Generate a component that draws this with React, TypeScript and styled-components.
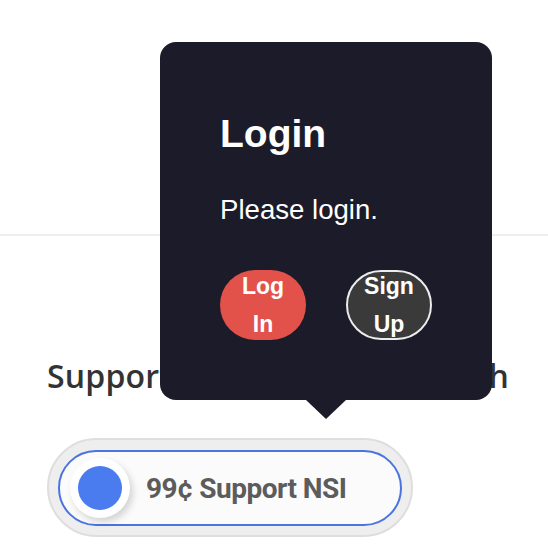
import React from "react";
import styled, { createGlobalStyle } from "styled-components";

const GlobalStyle = createGlobalStyle`
  html, body { margin: 0; padding: 0; background: #ffffff; }
  * { box-sizing: border-box; }
`;

const Page = styled.div`
  position: relative;
  width: 548px;
  height: 556px;
  overflow: hidden;
  background: #ffffff;
`;

const Header = styled.header`
  height: 236px;
  border-bottom: 2px solid #efefef;
`;

const Section = styled.section`
  padding: 0 0 0 47px;
`;

const Heading = styled.h2`
  margin: 122px 0 0 0;
  font-family: "Open Sans", sans-serif;
  font-weight: 600;
  font-size: 32px;
  line-height: 36px;
  letter-spacing: 0.2px;
  word-spacing: -12px;
  color: #333333;
  white-space: nowrap;
`;

const ToggleOuter = styled.div`
  margin-top: 44px;
  width: 366px;
  height: 99px;
  padding: 10px 9px 9px;
  border: 2px solid #dedede;
  border-radius: 50px;
  background: #efeeee;
`;

const ToggleInner = styled.div`
  display: flex;
  align-items: center;
  gap: 16px;
  height: 100%;
  padding-left: 10px;
  border: 2px solid #4a74df;
  border-radius: 40px;
  background: #fbfbfb;
`;

const Knob = styled.div`
  display: flex;
  align-items: center;
  justify-content: center;
  width: 60px;
  height: 60px;
  border-radius: 50%;
  background: #ffffff;
  box-shadow: 3px 4px 7px rgba(0, 0, 0, 0.16);
`;

const Dot = styled.div`
  width: 44px;
  height: 44px;
  border-radius: 50%;
  background: #4a7bef;
`;

const ToggleLabel = styled.span`
  font-family: Roboto, sans-serif;
  font-weight: 700;
  font-size: 28px;
  letter-spacing: -0.5px;
  color: #5c5c5c;
`;

const Tooltip = styled.div`
  position: absolute;
  left: 160px;
  top: 42px;
  width: 332px;
  padding: 70px 60px 60px;
  border-radius: 16px;
  background: #1c1b29;
  font-family: "Liberation Sans", Arial, sans-serif;
  color: #ffffff;

  &::after {
    content: "";
    position: absolute;
    top: 100%;
    left: 50%;
    transform: translateX(-50%);
    border-style: solid;
    border-width: 19px 20px 0 20px;
    border-color: #1c1b29 transparent transparent transparent;
  }
`;

const Title = styled.h3`
  margin: 0;
  font-size: 39px;
  line-height: 44px;
  font-weight: 700;
`;

const Message = styled.p`
  margin: 38px 0 0;
  font-size: 27.6px;
  line-height: 32px;
  font-weight: 400;
`;

const Actions = styled.div`
  display: flex;
  gap: 40px;
  margin-top: 44px;
`;

const ActionButton = styled.button<{ $variant: "primary" | "secondary" }>`
  display: flex;
  align-items: center;
  justify-content: center;
  width: 86px;
  height: 70px;
  padding: 0 14px;
  border-radius: 35px;
  border: ${(p) => (p.$variant === "secondary" ? "2px solid #ececec" : "none")};
  background: ${(p) => (p.$variant === "secondary" ? "#3a3a3a" : "#e2524a")};
  color: #ffffff;
  font-family: "Liberation Sans", Arial, sans-serif;
  font-weight: 700;
  font-size: 23px;
  line-height: 38px;
  text-align: center;
  cursor: pointer;
`;

export default function App() {
  return (
    <>
      <GlobalStyle />
      <Page>
        <Header />
        <Section>
          <Heading>Support Independent Research</Heading>
          <ToggleOuter>
            <ToggleInner>
              <Knob>
                <Dot />
              </Knob>
              <ToggleLabel>99¢ Support NSI</ToggleLabel>
            </ToggleInner>
          </ToggleOuter>
        </Section>
        <Tooltip role="dialog">
          <Title>Login</Title>
          <Message>Please login.</Message>
          <Actions>
            <ActionButton $variant="primary">Log In</ActionButton>
            <ActionButton $variant="secondary">Sign Up</ActionButton>
          </Actions>
        </Tooltip>
      </Page>
    </>
  );
}
